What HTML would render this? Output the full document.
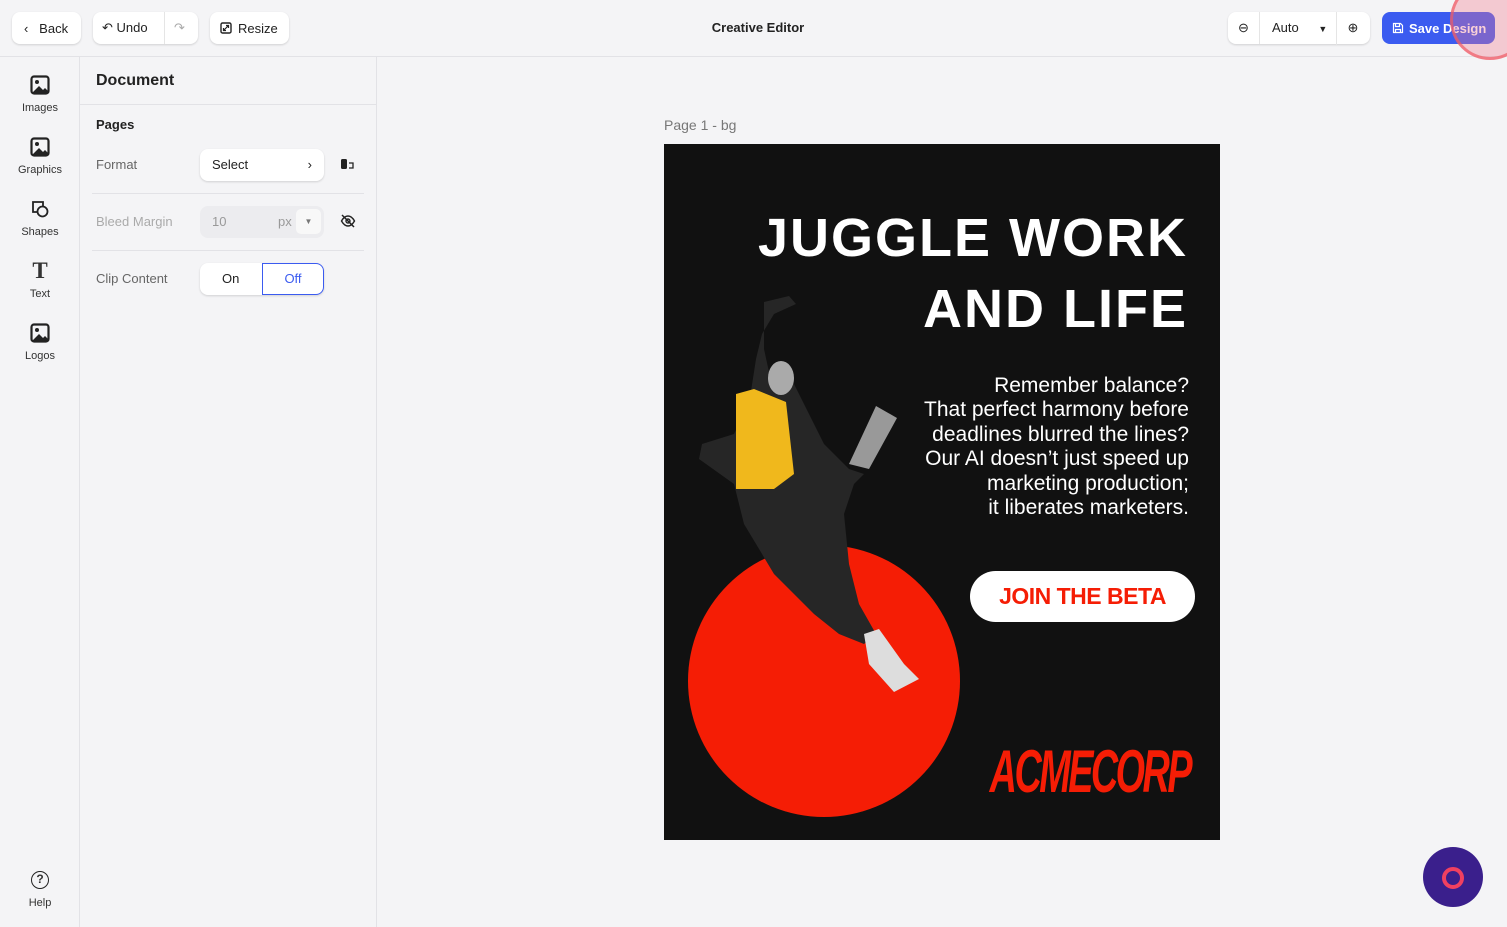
<!DOCTYPE html>
<html><head><style>
*{box-sizing:border-box;margin:0;padding:0}
body{width:1507px;height:927px;background:#f4f4f6;font-family:"Liberation Sans",sans-serif;position:relative;overflow:hidden;color:#222}
.btn{position:absolute;top:12px;height:32px;background:#fff;border-radius:8px;box-shadow:0 1px 2px rgba(0,0,0,.15);font-size:13px;display:flex;align-items:center;color:#222}
.abs{position:absolute}
.side{position:absolute;left:0;top:57px;width:80px;height:870px;border-right:1px solid #e2e2e6}
.si{position:absolute;left:0;width:80px;text-align:center;font-size:11px;color:#333}
.si svg{display:block;margin:0 auto}
.panel{position:absolute;left:80px;top:57px;width:297px;height:870px;border-right:1px solid #e2e2e6}
.lbl{position:absolute;left:16px;font-size:13px;color:#666}
</style></head><body>
<div class="abs" style="left:0;top:56px;width:1507px;height:1px;background:#e2e2e6"></div>
<div class="btn" style="left:12px;width:69px;padding-left:12px">‹&nbsp;&nbsp;&nbsp;Back</div>
<div class="btn" style="left:93px;width:105px"><span style="padding-left:9px;width:72px;border-right:1px solid #e5e5e5;height:32px;line-height:32px">↶ Undo</span><span style="color:#aaa;padding-left:9px">↷</span></div>
<div class="btn" style="left:210px;width:79px;padding-left:10px"><svg width="12" height="12" viewBox="0 0 12 12" style="margin-right:6px"><rect x="1" y="1" width="10" height="10" rx="1.5" fill="none" stroke="#222" stroke-width="1.4"/><path d="M3.5 8.5L8.5 3.5M6 3.5h2.5V6M3.5 6v2.5H6" fill="none" stroke="#222" stroke-width="1.2"/></svg>Resize</div>
<div class="abs" style="left:0;width:1516px;top:20px;text-align:center;font-size:13px;font-weight:bold;color:#222">Creative Editor</div>
<div class="btn" style="left:1228px;width:142px"><span style="width:32px;text-align:center;border-right:1px solid #e5e5e5;line-height:32px">⊖</span><span style="width:77px;padding-left:12px;border-right:1px solid #e5e5e5;line-height:32px">Auto <span style="font-size:9px;margin-left:16px">▼</span></span><span style="width:32px;text-align:center">⊕</span></div>
<div class="btn" style="left:1382px;width:113px;background:#3b5bf0;color:#fff;font-weight:bold;padding-left:10px;box-shadow:none"><svg width="12" height="12" viewBox="0 0 12 12" style="margin-right:5px"><path d="M1.5 1.5h7l2 2v7h-9z M3.5 1.5v3h4v-3 M3.5 10.5v-3h5v3" fill="none" stroke="#fff" stroke-width="1.2"/></svg>Save Design</div>
<div class="abs" style="left:1450px;top:-20px;width:80px;height:80px;border-radius:50%;border:3px solid rgba(240,90,100,.7);background:rgba(240,120,140,.35)"></div>

<div class="side">
<div class="si" style="top:18px"><svg width="20" height="20" viewBox="0 0 20 20"><rect x="1.5" y="1.5" width="17" height="17" rx="2.5" fill="none" stroke="#222" stroke-width="2.2"/><circle cx="7" cy="7" r="2" fill="#222"/><path d="M2 18l7-7 4 4 2-2 4 4v1z" fill="#222"/></svg><div style="margin-top:7px">Images</div></div>
<div class="si" style="top:80px"><svg width="20" height="20" viewBox="0 0 20 20"><rect x="1.5" y="1.5" width="17" height="17" rx="2.5" fill="none" stroke="#222" stroke-width="2.2"/><circle cx="7" cy="7" r="2" fill="#222"/><path d="M2 18l7-7 4 4 2-2 4 4v1z" fill="#222"/></svg><div style="margin-top:7px">Graphics</div></div>
<div class="si" style="top:142px"><svg width="20" height="20" viewBox="0 0 20 20"><path d="M7 13H3V3h10v4" fill="none" stroke="#222" stroke-width="1.8"/><circle cx="12.5" cy="12.5" r="5" fill="none" stroke="#222" stroke-width="1.8"/></svg><div style="margin-top:7px">Shapes</div></div>
<div class="si" style="top:204px"><div style="font-size:23px;line-height:20px;font-family:'Liberation Serif';font-weight:bold">T</div><div style="margin-top:7px">Text</div></div>
<div class="si" style="top:266px"><svg width="20" height="20" viewBox="0 0 20 20"><rect x="1.5" y="1.5" width="17" height="17" rx="2.5" fill="none" stroke="#222" stroke-width="2.2"/><circle cx="7" cy="7" r="2" fill="#222"/><path d="M2 18l7-7 4 4 2-2 4 4v1z" fill="#222"/></svg><div style="margin-top:7px">Logos</div></div>
<div class="si" style="top:814px"><div style="width:18px;height:18px;border:1.6px solid #222;border-radius:50%;margin:0 auto;font-size:12px;line-height:15px;font-weight:bold">?</div><div style="margin-top:8px">Help</div></div>
</div>

<div class="panel">
<div class="abs" style="left:16px;top:15px;font-size:16px;font-weight:bold">Document</div>
<div class="abs" style="left:0;top:47px;width:296px;height:1px;background:#e2e2e6"></div>
<div class="abs" style="left:16px;top:60px;font-size:13px;font-weight:bold">Pages</div>
<div class="lbl" style="top:100px">Format</div>
<div class="abs" style="left:120px;top:92px;width:124px;height:32px;background:#fff;border-radius:8px;box-shadow:0 1px 2px rgba(0,0,0,.15);font-size:13px;padding:8px 12px">Select<span style="float:right">›</span></div>
<svg class="abs" style="left:260px;top:101px" width="16" height="12" viewBox="0 0 16 12"><rect x="1" y="1" width="6" height="10" rx="1.5" fill="#222"/><path d="M9 5h4v5h-4" fill="none" stroke="#222" stroke-width="1.3"/></svg>
<div class="abs" style="left:12px;top:136px;width:272px;height:1px;background:#e2e2e6"></div>
<div class="lbl" style="top:157px;color:#aaa">Bleed Margin</div>
<div class="abs" style="left:120px;top:149px;width:124px;height:32px;background:#ececef;border-radius:8px;font-size:13px;color:#999;padding:8px 12px">10<span style="position:absolute;left:78px">px</span><span style="position:absolute;right:3px;top:3px;width:25px;height:25px;background:#f8f8f8;border-radius:5px;font-size:8px;text-align:center;line-height:25px;color:#777">▼</span></div>
<svg class="abs" style="left:260px;top:157px" width="16" height="14" viewBox="0 0 16 14"><path d="M1.5 7c2-3.5 4-5 6.5-5s4.5 1.5 6.5 5c-2 3.5-4 5-6.5 5S3.5 10.5 1.5 7z" fill="none" stroke="#222" stroke-width="1.4"/><circle cx="8" cy="7" r="2" fill="none" stroke="#222" stroke-width="1.4"/><path d="M2 1l12 12" stroke="#222" stroke-width="1.5"/></svg>
<div class="abs" style="left:12px;top:193px;width:272px;height:1px;background:#e2e2e6"></div>
<div class="lbl" style="top:214px">Clip Content</div>
<div class="abs" style="left:120px;top:206px;width:124px;height:32px;background:#fff;border-radius:8px;box-shadow:0 1px 2px rgba(0,0,0,.15);font-size:13px"><span class="abs" style="left:22px;top:8px">On</span><span class="abs" style="left:62px;top:0;width:62px;height:32px;border:1px solid #3b5bf0;border-radius:0 8px 8px 0;color:#3b5bf0;text-align:center;line-height:30px">Off</span></div>
</div>

<div class="abs" style="left:664px;top:117px;font-size:14px;color:#777">Page 1 - bg</div>
<div class="abs" style="left:664px;top:144px;width:556px;height:696px;background:#111;overflow:hidden">
<div class="abs" style="left:24px;top:401px;width:272px;height:272px;border-radius:50%;background:#f51d05"></div>
<svg class="abs" style="left:0;top:0" width="556" height="696">
<path d="M100 158 L125 152 L132 160 L110 170 L98 190 L92 215 L85 260 L70 290 L38 300 L35 315 L70 340 L80 380 L110 430 L150 470 L175 490 L200 500 L212 490 L195 460 L185 420 L180 370 L190 340 L200 330 L185 325 L160 300 L140 260 L130 240 L120 228 L105 228 L100 205 Z" fill="#262626"/>
<path d="M72 250 L90 245 L122 258 L130 330 L110 345 L72 345 Z" fill="#f0b81c"/>
<ellipse cx="117" cy="234" rx="13" ry="17" fill="#aaa"/>
<path d="M185 320 L212 262 L233 274 L205 325 Z" fill="#999"/>
<path d="M200 490 L215 485 L240 520 L255 535 L230 548 L205 520 Z" fill="#ddd"/>
</svg>
<div class="abs" style="right:32px;top:59px;text-align:right;color:#fff;font-weight:bold;font-size:54px;line-height:71px;letter-spacing:2px">JUGGLE WORK<br>AND LIFE</div>
<div class="abs" style="right:31px;top:230px;text-align:right;color:#fff;font-size:21px;line-height:24.4px">Remember balance?<br>That perfect harmony before<br>deadlines blurred the lines?<br>Our AI doesn’t just speed up<br>marketing production;<br>it liberates marketers.</div>
<div class="abs" style="left:306px;top:427px;width:225px;height:51px;background:#fff;border-radius:26px;color:#f51d05;font-weight:bold;font-size:23px;text-align:center;line-height:51px;letter-spacing:-0.5px">JOIN THE BETA</div>
<div class="abs" style="right:30px;top:600px;color:#f51d05;font-weight:bold;font-style:italic;font-size:60px;line-height:56px;letter-spacing:-4px;transform:scaleX(0.63);transform-origin:right">ACMECORP</div>
</div>

<div class="abs" style="left:1423px;top:847px;width:60px;height:60px;border-radius:50%;background:#3a1f8c"><div class="abs" style="left:19px;top:20px;width:22px;height:22px;border:4px solid #f04060;border-radius:50%"></div></div>
</body></html>
